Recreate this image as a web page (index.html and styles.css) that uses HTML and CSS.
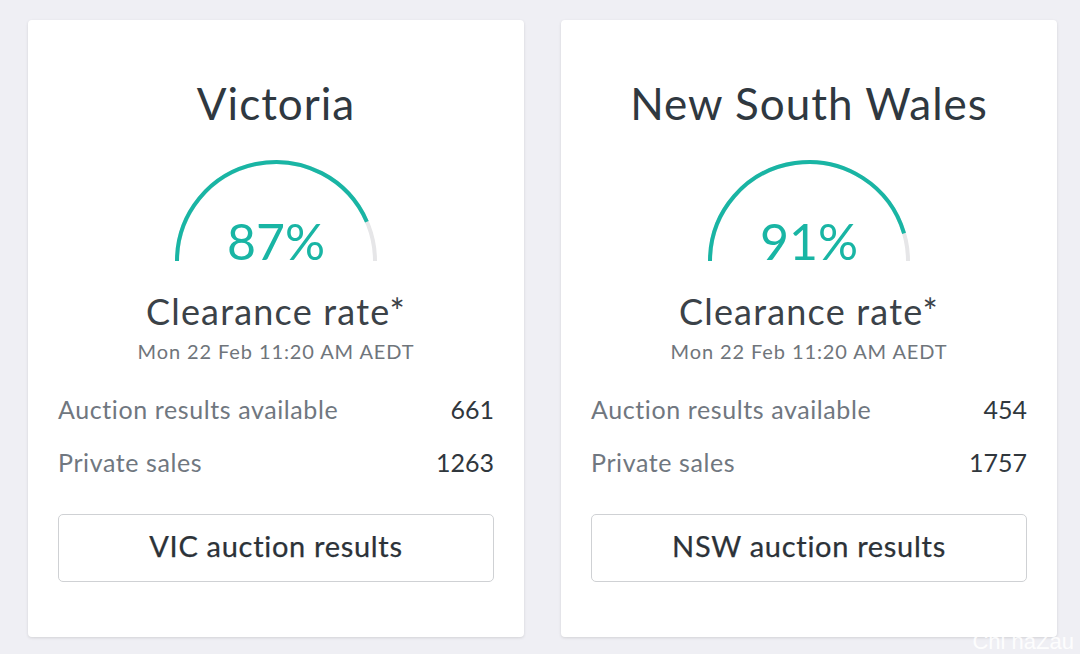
FILE: index.html
```html
<!DOCTYPE html>
<html>
<head>
<meta charset="utf-8">
<link rel="stylesheet" href="styles.css">
</head>
<body>
<div class="page">
  <div class="card">
    <h2 class="title">Victoria</h2>
    <div class="gauge">
      <svg class="arc" viewBox="0 0 210 106" width="210" height="106">
        <path d="M6 103 A99 99 0 0 1 204 103" fill="none" stroke="#e6e6e8" stroke-width="4"/>
        <path d="M6 103 A99 99 0 0 1 195.85 63.67" fill="none" stroke="#19b5a4" stroke-width="4"/>
      </svg>
      <div class="pct">87%</div>
    </div>
    <div class="label">Clearance rate*</div>
    <div class="date">Mon 22 Feb 11:20 AM AEDT</div>
    <div class="stats">
      <div class="row"><span>Auction results available</span><b>661</b></div>
      <div class="row"><span>Private sales</span><b>1263</b></div>
    </div>
    <div class="btn">VIC auction results</div>
  </div>
  <div class="card">
    <h2 class="title">New South Wales</h2>
    <div class="gauge">
      <svg class="arc" viewBox="0 0 210 106" width="210" height="106">
        <path d="M6 103 A99 99 0 0 1 204 103" fill="none" stroke="#e6e6e8" stroke-width="4"/>
        <path d="M6 103 A99 99 0 0 1 200.06 75.37" fill="none" stroke="#19b5a4" stroke-width="4"/>
      </svg>
      <div class="pct">91%</div>
    </div>
    <div class="label">Clearance rate*</div>
    <div class="date">Mon 22 Feb 11:20 AM AEDT</div>
    <div class="stats">
      <div class="row"><span>Auction results available</span><b>454</b></div>
      <div class="row"><span>Private sales</span><b>1757</b></div>
    </div>
    <div class="btn">NSW auction results</div>
  </div>
</div>
<div class="watermark">Chi naZau</div>
</body>
</html>
```
FILE: styles.css
```css
html, body {
  margin: 0;
  padding: 0;
  background: #efeff4;
  font-family: Lato, "Open Sans", sans-serif;
  height: 654px;
  overflow: hidden;
}
.page {
  display: flex;
  gap: 37px;
  padding: 20px 23px 0 28px;
}
.card {
  width: 496px;
  height: 617px;
  box-sizing: border-box;
  background: #fff;
  border-radius: 4px;
  box-shadow: 0 1px 3px rgba(0,0,0,0.12);
  padding: 0 30px;
  display: flex;
  flex-direction: column;
  align-items: stretch;
}
.title {
  margin: 57px 0 0;
  font-weight: 400;
  font-size: 44px;
  line-height: 52px;
  letter-spacing: 1px;
  color: #2f3840;
  text-align: center;
}
.gauge {
  display: grid;
  justify-items: center;
  margin-top: 29px;
}
.arc, .pct {
  grid-area: 1 / 1;
}
.pct {
  align-self: end;
  font-size: 50px;
  line-height: 50px;
  color: #19b5a4;
  margin-bottom: -2px;
}
.label {
  margin-top: 25px;
  text-align: center;
  font-size: 36px;
  line-height: 44px;
  letter-spacing: 1.2px;
  color: #3b4248;
}
.date {
  margin-top: 5px;
  text-align: center;
  font-size: 20px;
  line-height: 26px;
  letter-spacing: 0.9px;
  color: #6f757b;
}
.stats {
  margin-top: 18px;
  display: flex;
  flex-direction: column;
}
.row {
  display: flex;
  justify-content: space-between;
  align-items: center;
  height: 53px;
  font-size: 25px;
  color: #707780;
}
.row span {
  letter-spacing: 0.6px;
}
.row b {
  font-weight: 400;
  color: #30373d;
}
.btn {
  margin-top: 26px;
  height: 68px;
  box-sizing: border-box;
  border: 1.5px solid #cfd1d4;
  border-radius: 5px;
  padding-bottom: 5px;
  display: flex;
  align-items: center;
  justify-content: center;
  font-size: 29px;
  letter-spacing: 0.7px;
  color: #2c3238;
  -webkit-text-stroke: 0.25px #2c3238;
}
.watermark {
  position: absolute;
  right: 6px;
  bottom: 0;
  white-space: nowrap;
  font-family: "Liberation Sans", Arial, sans-serif;
  font-size: 22px;
  line-height: 24px;
  color: rgba(255,255,255,0.9);
}
```
